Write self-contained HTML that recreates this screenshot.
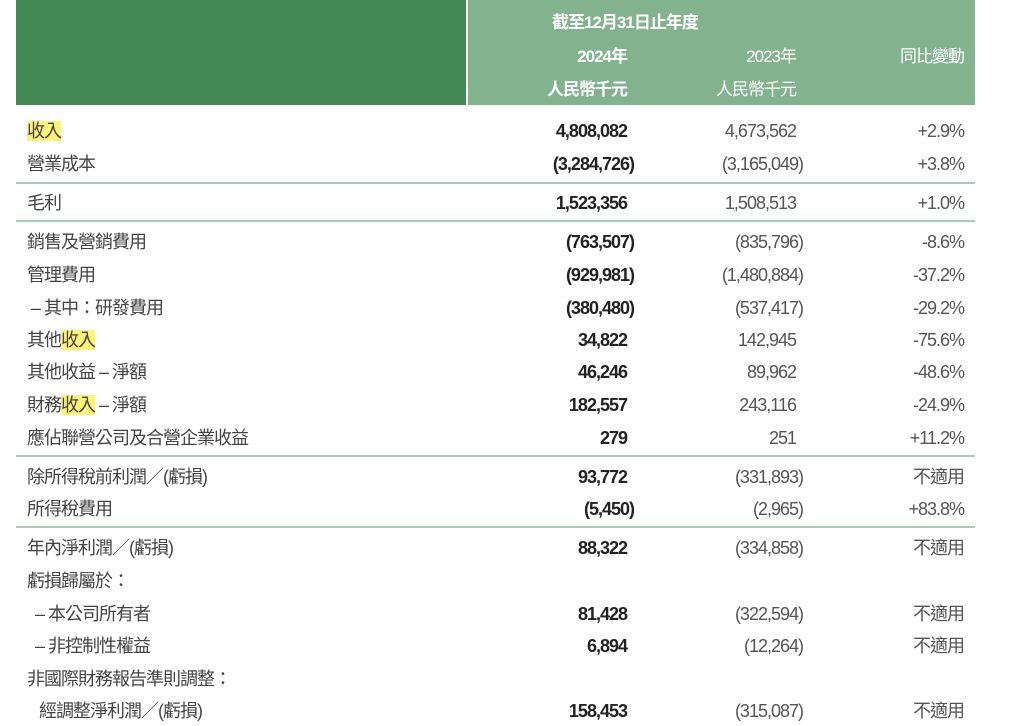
<!DOCTYPE html>
<html><head><meta charset="utf-8"><style>
body{margin:0;width:1024px;height:726px;background:#fff;overflow:hidden;font-family:"Liberation Sans","Noto Sans CJK TC",sans-serif;color:#3a3a3a;position:relative}
.dk{position:absolute;left:16px;top:0;width:450px;height:105px;background:#438956}
.lt{position:absolute;left:468px;top:0;width:507px;height:105px;background:#82b38e}
.h{position:absolute;color:#fff;font-size:17px;letter-spacing:-1px;white-space:nowrap}
.b{font-weight:bold}
.r{position:absolute;left:0;width:1024px;height:30px;font-size:18px;letter-spacing:-1px;white-space:nowrap}
.r span{position:absolute;top:0;line-height:30px}
.l{left:27px;color:#444}
.c1{right:390px;font-weight:bold;color:#222}
.c2{right:221px;color:#555}
.c3{right:60px;color:#555}
.np{padding-right:7px}
.hl{background:#fff27a}
.ln{position:absolute;left:16px;width:959px;height:2px;background:#a9cdb2}
</style></head><body>
<div class="dk"></div><div class="lt"></div>
<div class="h b" style="left:552px;top:8px">截至12月31日止年度</div>
<div class="h b" style="right:397px;top:42px">2024年</div>
<div class="h" style="right:228px;top:42px">2023年</div>
<div class="h" style="right:60px;top:42px">同比變動</div>
<div class="h b" style="right:397px;top:75px">人民幣千元</div>
<div class="h" style="right:228px;top:75px">人民幣千元</div>

<div class="r" style="top:116px"><span class="l"><span class="hl" style="position:static">收入</span></span><span class="c1 np">4,808,082</span><span class="c2 np">4,673,562</span><span class="c3">+2.9%</span></div>
<div class="r" style="top:149px"><span class="l">營業成本</span><span class="c1">(3,284,726)</span><span class="c2">(3,165,049)</span><span class="c3">+3.8%</span></div>
<div class="ln" style="top:182px"></div>
<div class="r" style="top:188px"><span class="l">毛利</span><span class="c1 np">1,523,356</span><span class="c2 np">1,508,513</span><span class="c3">+1.0%</span></div>
<div class="ln" style="top:220px"></div>
<div class="r" style="top:227px"><span class="l">銷售及營銷費用</span><span class="c1">(763,507)</span><span class="c2">(835,796)</span><span class="c3">-8.6%</span></div>
<div class="r" style="top:260px"><span class="l">管理費用</span><span class="c1">(929,981)</span><span class="c2">(1,480,884)</span><span class="c3">-37.2%</span></div>
<div class="r" style="top:293px"><span class="l">&nbsp;– 其中：研發費用</span><span class="c1">(380,480)</span><span class="c2">(537,417)</span><span class="c3">-29.2%</span></div>
<div class="r" style="top:325px"><span class="l">其他<span class="hl" style="position:static">收入</span></span><span class="c1 np">34,822</span><span class="c2 np">142,945</span><span class="c3">-75.6%</span></div>
<div class="r" style="top:357px"><span class="l">其他收益 – 淨額</span><span class="c1 np">46,246</span><span class="c2 np">89,962</span><span class="c3">-48.6%</span></div>
<div class="r" style="top:390px"><span class="l">財務<span class="hl" style="position:static">收入</span> – 淨額</span><span class="c1 np">182,557</span><span class="c2 np">243,116</span><span class="c3">-24.9%</span></div>
<div class="r" style="top:423px"><span class="l">應佔聯營公司及合營企業收益</span><span class="c1 np">279</span><span class="c2 np">251</span><span class="c3">+11.2%</span></div>
<div class="ln" style="top:455px"></div>
<div class="r" style="top:462px"><span class="l">除所得稅前利潤／(虧損)</span><span class="c1 np">93,772</span><span class="c2">(331,893)</span><span class="c3">不適用</span></div>
<div class="r" style="top:494px"><span class="l">所得稅費用</span><span class="c1">(5,450)</span><span class="c2">(2,965)</span><span class="c3">+83.8%</span></div>
<div class="ln" style="top:526px"></div>
<div class="r" style="top:533px"><span class="l">年內淨利潤／(虧損)</span><span class="c1 np">88,322</span><span class="c2">(334,858)</span><span class="c3">不適用</span></div>
<div class="r" style="top:566px"><span class="l">虧損歸屬於：</span></div>
<div class="r" style="top:599px"><span class="l">&nbsp;&nbsp;– 本公司所有者</span><span class="c1 np">81,428</span><span class="c2">(322,594)</span><span class="c3">不適用</span></div>
<div class="r" style="top:631px"><span class="l">&nbsp;&nbsp;– 非控制性權益</span><span class="c1 np">6,894</span><span class="c2">(12,264)</span><span class="c3">不適用</span></div>
<div class="r" style="top:664px"><span class="l">非國際財務報告準則調整：</span></div>
<div class="r" style="top:696px"><span class="l">&nbsp;&nbsp;&nbsp;經調整淨利潤／(虧損)</span><span class="c1 np">158,453</span><span class="c2">(315,087)</span><span class="c3">不適用</span></div>
</body></html>
